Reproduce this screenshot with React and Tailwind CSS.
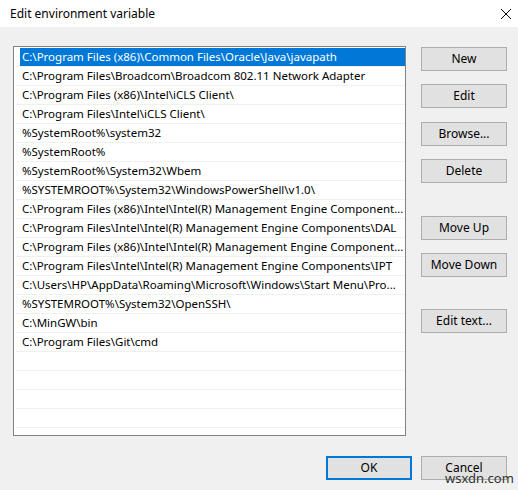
import React, { useState } from 'react';

// long entries are shown already shortened, as the list draws them
const paths = [
  'C:\\Program Files (x86)\\Common Files\\Oracle\\Java\\javapath',
  'C:\\Program Files\\Broadcom\\Broadcom 802.11 Network Adapter',
  'C:\\Program Files (x86)\\Intel\\iCLS Client\\',
  'C:\\Program Files\\Intel\\iCLS Client\\',
  '%SystemRoot%\\system32',
  '%SystemRoot%',
  '%SystemRoot%\\System32\\Wbem',
  '%SYSTEMROOT%\\System32\\WindowsPowerShell\\v1.0\\',
  'C:\\Program Files (x86)\\Intel\\Intel(R) Management Engine Component...',
  'C:\\Program Files\\Intel\\Intel(R) Management Engine Components\\DAL',
  'C:\\Program Files (x86)\\Intel\\Intel(R) Management Engine Component...',
  'C:\\Program Files\\Intel\\Intel(R) Management Engine Components\\IPT',
  'C:\\Users\\HP\\AppData\\Roaming\\Microsoft\\Windows\\Start Menu\\Pro...',
  '%SYSTEMROOT%\\System32\\OpenSSH\\',
  'C:\\MinGW\\bin',
  'C:\\Program Files\\Git\\cmd',
];

const EMPTY_ROWS = 5;

const Button = ({ children, className = '', primary = false }) => (
  <button
    className={`h-[24px] w-[86px] bg-[#e1e1e1] text-[12px] text-black ${
      primary ? 'border-2 border-[#0078d7]' : 'border border-[#adadad]'
    } ${className}`}
  >
    {children}
  </button>
);

const App = () => {
  const [selected, setSelected] = useState(0);

  return (
    <div
      className="relative flex h-[490px] w-[518px] flex-col bg-[#f0f0f0] text-black"
      style={{ fontFamily: '"Noto Sans", "Open Sans", sans-serif' }}
    >
      {/* title bar */}
      <div className="flex h-[27px] items-center justify-between bg-white pl-[10px] pr-[5px]">
        <span className="text-[12px]">Edit environment variable</span>
        <svg width="12" height="12" viewBox="0 0 12 12" className="mr-[1px]">
          <path d="M1 1L11 11M11 1L1 11" stroke="#000" strokeWidth="1" />
        </svg>
      </div>

      <div className="flex pl-[13px] pt-[19px]">
        {/* path list */}
        <div className="h-[390px] w-[393px] overflow-hidden border border-[#828282] bg-white pt-[1px] pl-[2px]">
          {paths.map((p, i) => (
            <div
              key={i}
              onClick={() => setSelected(i)}
              className="flex h-[19px] items-center border-b border-[#f0f0f0] text-[11.5px]"
            >
              <div
                className={`ml-[4px] flex h-full flex-1 items-center whitespace-nowrap pl-[2px] ${
                  selected === i ? 'bg-[#0078d7] text-white' : ''
                }`}
              >
                {p}
              </div>
            </div>
          ))}
          {Array.from({ length: EMPTY_ROWS }).map((_, i) => (
            <div key={i} className="h-[19px] border-b border-[#f0f0f0]" />
          ))}
        </div>

        {/* side buttons */}
        <div className="ml-[15px] flex flex-col pt-[1px]">
          <Button>New</Button>
          <Button className="mt-[13px]">Edit</Button>
          <Button className="mt-[14px]">Browse...</Button>
          <Button className="mt-[13px]">Delete</Button>
          <Button className="mt-[33px]">Move Up</Button>
          <Button className="mt-[13px]">Move Down</Button>
          <Button className="mt-[32px]">Edit text...</Button>
        </div>
      </div>

      <div className="mt-[20px] flex justify-end gap-[9px] pr-[11px]">
        <Button primary>OK</Button>
        <Button>Cancel</Button>
      </div>

      <span className="absolute left-[445px] top-[472px] text-[13px] leading-none text-[#333]">
        wsxdn.com
      </span>
    </div>
  );
};

export default App;
